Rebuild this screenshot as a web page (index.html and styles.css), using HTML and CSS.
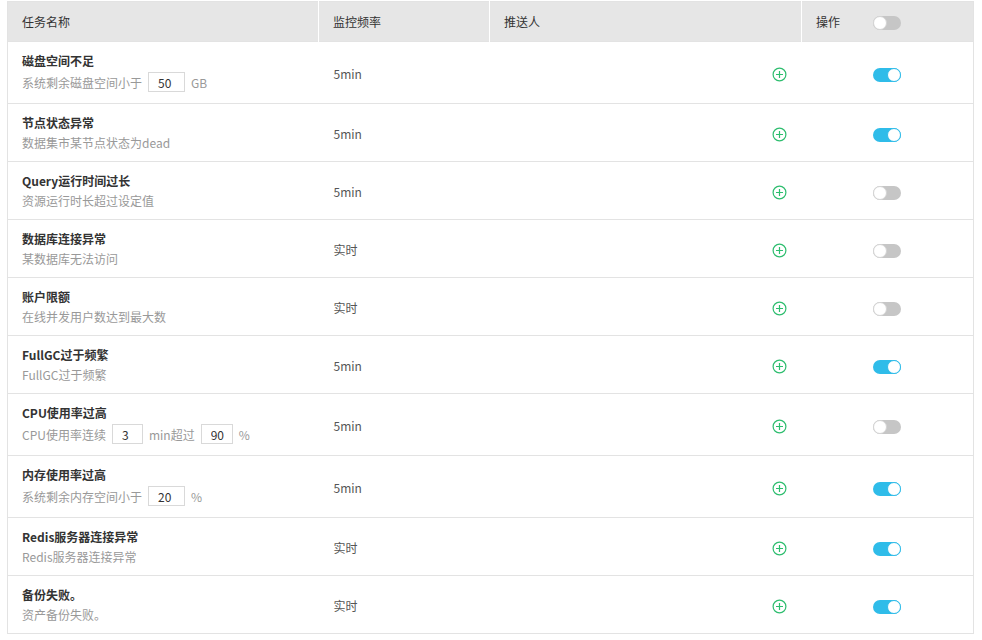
FILE: index.html
```html
<!DOCTYPE html>
<html>
  <head>
    <title>监控任务</title>
    <link rel="stylesheet" href="styles.css">
  </head>
  <body>
    <table class="task-table">
      <colgroup>
        <col class="col-name">
        <col class="col-freq">
        <col class="col-push">
        <col class="col-op">
      </colgroup>
      <thead>
        <tr>
          <th>任务名称</th>
          <th>监控频率</th>
          <th>推送人</th>
          <th>操作 <span class="switch head-switch"></span></th>
        </tr>
      </thead>
      <tbody>
        <tr class="tall">
          <td>
            <div class="task-title">磁盘空间不足</div>
            <div class="task-desc">系统剩余磁盘空间小于<input class="num w37" value="50">GB</div>
          </td>
          <td class="freq">5min</td>
          <td class="push"><svg class="add" width="15" height="15" viewBox="0 0 15 15"><circle cx="7.5" cy="7.5" r="6.4"/><path d="M7.5 4v7M4 7.5h7"/></svg></td>
          <td class="op"><span class="switch on"></span></td>
        </tr>
        <tr>
          <td>
            <div class="task-title">节点状态异常</div>
            <div class="task-desc">数据集市某节点状态为dead</div>
          </td>
          <td class="freq">5min</td>
          <td class="push"><svg class="add" width="15" height="15" viewBox="0 0 15 15"><circle cx="7.5" cy="7.5" r="6.4"/><path d="M7.5 4v7M4 7.5h7"/></svg></td>
          <td class="op"><span class="switch on"></span></td>
        </tr>
        <tr>
          <td>
            <div class="task-title">Query运行时间过长</div>
            <div class="task-desc">资源运行时长超过设定值</div>
          </td>
          <td class="freq">5min</td>
          <td class="push"><svg class="add" width="15" height="15" viewBox="0 0 15 15"><circle cx="7.5" cy="7.5" r="6.4"/><path d="M7.5 4v7M4 7.5h7"/></svg></td>
          <td class="op"><span class="switch"></span></td>
        </tr>
        <tr>
          <td>
            <div class="task-title">数据库连接异常</div>
            <div class="task-desc">某数据库无法访问</div>
          </td>
          <td class="freq">实时</td>
          <td class="push"><svg class="add" width="15" height="15" viewBox="0 0 15 15"><circle cx="7.5" cy="7.5" r="6.4"/><path d="M7.5 4v7M4 7.5h7"/></svg></td>
          <td class="op"><span class="switch"></span></td>
        </tr>
        <tr>
          <td>
            <div class="task-title">账户限额</div>
            <div class="task-desc">在线并发用户数达到最大数</div>
          </td>
          <td class="freq">实时</td>
          <td class="push"><svg class="add" width="15" height="15" viewBox="0 0 15 15"><circle cx="7.5" cy="7.5" r="6.4"/><path d="M7.5 4v7M4 7.5h7"/></svg></td>
          <td class="op"><span class="switch"></span></td>
        </tr>
        <tr>
          <td>
            <div class="task-title">FullGC过于频繁</div>
            <div class="task-desc">FullGC过于频繁</div>
          </td>
          <td class="freq">5min</td>
          <td class="push"><svg class="add" width="15" height="15" viewBox="0 0 15 15"><circle cx="7.5" cy="7.5" r="6.4"/><path d="M7.5 4v7M4 7.5h7"/></svg></td>
          <td class="op"><span class="switch on"></span></td>
        </tr>
        <tr class="tall">
          <td>
            <div class="task-title">CPU使用率过高</div>
            <div class="task-desc">CPU使用率连续<input class="num w31" value="3">min超过<input class="num w32" value="90">%</div>
          </td>
          <td class="freq">5min</td>
          <td class="push"><svg class="add" width="15" height="15" viewBox="0 0 15 15"><circle cx="7.5" cy="7.5" r="6.4"/><path d="M7.5 4v7M4 7.5h7"/></svg></td>
          <td class="op"><span class="switch"></span></td>
        </tr>
        <tr class="tall">
          <td>
            <div class="task-title">内存使用率过高</div>
            <div class="task-desc">系统剩余内存空间小于<input class="num w37" value="20">%</div>
          </td>
          <td class="freq">5min</td>
          <td class="push"><svg class="add" width="15" height="15" viewBox="0 0 15 15"><circle cx="7.5" cy="7.5" r="6.4"/><path d="M7.5 4v7M4 7.5h7"/></svg></td>
          <td class="op"><span class="switch on"></span></td>
        </tr>
        <tr>
          <td>
            <div class="task-title">Redis服务器连接异常</div>
            <div class="task-desc">Redis服务器连接异常</div>
          </td>
          <td class="freq">实时</td>
          <td class="push"><svg class="add" width="15" height="15" viewBox="0 0 15 15"><circle cx="7.5" cy="7.5" r="6.4"/><path d="M7.5 4v7M4 7.5h7"/></svg></td>
          <td class="op"><span class="switch on"></span></td>
        </tr>
        <tr>
          <td>
            <div class="task-title">备份失败。</div>
            <div class="task-desc">资产备份失败。</div>
          </td>
          <td class="freq">实时</td>
          <td class="push"><svg class="add" width="15" height="15" viewBox="0 0 15 15"><circle cx="7.5" cy="7.5" r="6.4"/><path d="M7.5 4v7M4 7.5h7"/></svg></td>
          <td class="op"><span class="switch on"></span></td>
        </tr>
      </tbody>
    </table>
  </body>
</html>
```

FILE: styles.css
```css
body{
  margin: 0;
  padding: 1px 8px 0 7px;
  background-color: white;
  font-family: "Noto Sans CJK SC", "Noto Sans", sans-serif;
  font-size: 12px;
  color: #333;
}
.task-table{
  width: 966px;
  table-layout: fixed;
  border-collapse: collapse;
  border: 1px solid #e3e3e3;
}
.col-name{ width: 311px; }
.col-freq{ width: 171px; }
.col-push{ width: 312px; }
.col-op{ width: 172px; }

.task-table th{
  height: 39px;
  padding: 0 14px;
  background-color: #e6e6e6;
  border-left: 1px solid white;
  text-align: left;
  font-weight: normal;
  color: #333;
  line-height: 20px;
}
.task-table th:first-child{
  border-left: none;
}
.head-switch{
  margin-left: 30px;
  vertical-align: -3px;
}

.task-table td{
  padding: 9px 14px 8px;
  border-top: 1px solid #e3e3e3;
  vertical-align: middle;
}
.task-title{
  font-weight: bold;
  line-height: 20px;
  color: #333;
}
.task-desc{
  line-height: 20px;
  color: #999;
}
.tall .task-desc{
  height: 24px;
  line-height: 23px;
}
.num{
  box-sizing: border-box;
  height: 20px;
  margin: 1px 6px 0;
  padding: 0 0 0 9px;
  border: 1px solid #d9d9d9;
  font-family: inherit;
  font-size: 12px;
  color: #333;
  vertical-align: top;
  outline: none;
}
.w37{ width: 37px; }
.w31{ width: 31px; }
.w32{ width: 32px; }

.freq{
  color: #555;
  padding-left: 15px !important;
}
.push{
  text-align: right;
  padding-right: 15px !important;
}
.op{
  padding-left: 71px !important;
}

.add{
  fill: none;
  stroke: #2dbd6e;
  stroke-width: 1.2;
  vertical-align: middle;
}

.switch{
  display: inline-block;
  position: relative;
  width: 28px;
  height: 14px;
  border-radius: 7px;
  background-color: #c6c6c6;
  vertical-align: middle;
}
.switch::after{
  content: "";
  position: absolute;
  left: 0;
  top: 0;
  width: 12px;
  height: 12px;
  border: 1px solid #d4d4d4;
  border-radius: 50%;
  background-color: white;
}
.switch.on{
  background-color: #2fbce9;
}
.switch.on::after{
  left: 14px;
  border-color: #2fbce9;
}
```
